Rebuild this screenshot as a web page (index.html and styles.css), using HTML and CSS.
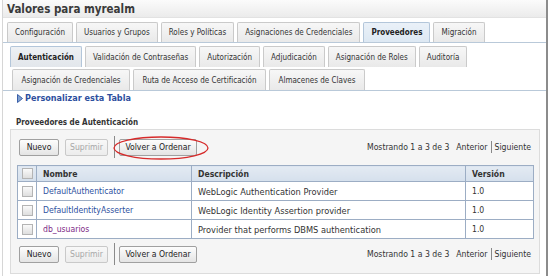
FILE: index.html
```html
<!DOCTYPE html>
<html lang="es">
<head>
<meta charset="utf-8">
<title>Valores para myrealm</title>
<link rel="stylesheet" href="styles.css">
</head>
<body>
<div class="panel">
  <div class="titlebar">Valores para myrealm</div>
  <div class="tabs top">
    <span class="tab">Configuración</span>
    <span class="tab">Usuarios y Grupos</span>
    <span class="tab">Roles y Políticas</span>
    <span class="tab">Asignaciones de Credenciales</span>
    <span class="tab active">Proveedores</span>
    <span class="tab">Migración</span>
  </div>
  <div class="tabs sub">
    <span class="tab active">Autenticación</span>
    <span class="tab">Validación de Contraseñas</span>
    <span class="tab">Autorización</span>
    <span class="tab">Adjudicación</span>
    <span class="tab">Asignación de Roles</span>
    <span class="tab">Auditoría</span>
    <span class="tab row3 first">Asignación de Credenciales</span>
    <span class="tab row3">Ruta de Acceso de Certificación</span>
    <span class="tab row3">Almacenes de Claves</span>
  </div>
  <div class="customize">
    <svg class="cust-icon" width="6" height="9" viewBox="0 0 6 9"><path d="M0.5 0.5 L5.5 4.5 L0.5 8.5 Z" fill="#7fa0d0" stroke="#3a5fa8" stroke-width="1"/></svg>
    <span class="link bold">Personalizar esta Tabla</span>
  </div>
  <div class="section">Proveedores de Autenticación</div>
  <div class="tablebox">
    <div class="toolbar">
      <div class="btns">
        <span class="btn b-new">Nuevo</span>
        <span class="btn b-del disabled">Suprimir</span>
        <span class="sep"></span>
        <span class="btn b-order">Volver a Ordenar<svg class="ring" width="96" height="24" viewBox="0 0 96 24"><ellipse cx="48" cy="12" rx="47" ry="11" fill="none" stroke="#d62a2a" stroke-width="1.3"/></svg></span>
      </div>
      <div class="pager">Mostrando 1 a 3 de 3<span class="gap"></span>Anterior<span class="bar"></span>Siguiente</div>
    </div>
    <table class="grid">
      <colgroup>
        <col class="w-chk"><col class="w-name"><col class="w-desc"><col class="w-ver">
      </colgroup>
      <tr class="head">
        <th class="chk"><span class="box"></span></th>
        <th>Nombre</th>
        <th>Descripción</th>
        <th>Versión</th>
      </tr>
      <tr>
        <td class="chk"><span class="box"></span></td>
        <td><span class="link">DefaultAuthenticator</span></td>
        <td class="desc">WebLogic Authentication Provider</td>
        <td>1.0</td>
      </tr>
      <tr>
        <td class="chk"><span class="box"></span></td>
        <td><span class="link">DefaultIdentityAsserter</span></td>
        <td class="desc">WebLogic Identity Assertion provider</td>
        <td>1.0</td>
      </tr>
      <tr>
        <td class="chk"><span class="box"></span></td>
        <td><span class="link visited">db_usuarios</span></td>
        <td class="desc">Provider that performs DBMS authentication</td>
        <td>1.0</td>
      </tr>
    </table>
    <div class="toolbar bottom">
      <div class="btns">
        <span class="btn b-new">Nuevo</span>
        <span class="btn b-del disabled">Suprimir</span>
        <span class="sep"></span>
        <span class="btn b-order">Volver a Ordenar</span>
      </div>
      <div class="pager">Mostrando 1 a 3 de 3<span class="gap"></span>Anterior<span class="bar"></span>Siguiente</div>
    </div>
  </div>
</div>
</body>
</html>
```
FILE: styles.css
```css
html, body {
  margin: 0;
  padding: 0;
  background: #ffffff;
}
body {
  font-family: "DejaVu Sans Condensed", "DejaVu Sans", sans-serif;
  font-stretch: condensed;
  font-size: 8px;
  color: #333333;
  width: 555px;
  height: 276px;
  overflow: hidden;
}
.panel {
  margin-left: 2px;
  width: 543px;
  height: 276px;
  border-left: 1px solid #d6d6d6;
  border-right: 2px solid #8c8c8c;
  background: #ffffff;
}
.titlebar {
  height: 17px;
  line-height: 18px;
  padding-left: 4px;
  font-weight: bold;
  font-size: 11.5px;
  color: #3a3a3a;
  background: linear-gradient(#fbfbfb, #ebebeb);
  border-bottom: 1px solid #e2e2e2;
}
.tabs {
  display: flex;
  flex-wrap: wrap;
  gap: 2px 3px;
  padding-left: 4px;
  border-bottom: 1px solid #b9c9d9;
}
.tabs.top {
  padding-top: 4px;
}
.tabs.sub {
  padding-top: 3px;
  padding-left: 7px;
}
.tab {
  display: flex;
  align-items: center;
  height: 19px;
  padding: 0 7px;
  border: 1px solid #cacaca;
  border-bottom: none;
  border-radius: 2px 2px 0 0;
  background: linear-gradient(#f7f7f7, #e9e9e9);
  color: #333333;
  white-space: nowrap;
}
.tabs.sub .tab {
  height: 20px;
}
.tabs.sub .tab.row3 {
  padding: 0 8.5px;
}
.tabs.sub .tab.first {
  margin-left: 2px;
}
.tab.active {
  font-weight: bold;
  color: #222222;
  background: linear-gradient(#eaf1f8, #dde8f3);
  border-color: #b3c6da;
}
.tabs.sub .tab.active {
  background: linear-gradient(#eef1f4, #e2e6eb);
}
.customize {
  display: flex;
  align-items: center;
  gap: 2px;
  height: 14px;
  margin-top: 0;
  padding-left: 14px;
  font-size: 9px;
}
.link {
  color: #2d4f9e;
}
.link.visited {
  color: #7d2a86;
}
.bold {
  font-weight: bold;
}
.section {
  margin-top: 12px;
  padding-left: 13px;
  height: 12px;
  line-height: 12px;
  font-weight: bold;
  color: #333333;
}
.tablebox {
  margin: 0 6px 0 7px;
  height: 143px;
  border: 1px solid #dcdcdc;
  background: #f5f5f5;
  padding: 0 6px 0 6px;
  font-size: 8.6px;
}
.toolbar {
  display: flex;
  justify-content: space-between;
  align-items: center;
  height: 24px;
  margin-top: 5px;
  padding-left: 2px;
}
.toolbar.bottom {
  margin-top: 3px;
}
.btns {
  display: flex;
  align-items: center;
  gap: 6px;
}
.btn {
  position: relative;
  display: inline-flex;
  align-items: center;
  justify-content: center;
  box-sizing: border-box;
  height: 17px;
  padding: 0;
  border: 1px solid #a0a0a0;
  border-radius: 2px;
  background: linear-gradient(#fdfdfd, #e4e4e4);
  color: #222222;
  white-space: nowrap;
}
.b-new { width: 40px; }
.b-del { width: 43px; }
.b-order { width: 78px; }
.btn.disabled {
  color: #a8a8a8;
  border-color: #c9c9c9;
  background: linear-gradient(#f8f8f8, #ececec);
}
.sep {
  width: 1px;
  height: 22px;
  background: #8a8a8a;
  margin: 0 -2px 0 0;
}
.ring {
  position: absolute;
  left: -7px;
  top: -4px;
}
.pager {
  display: flex;
  align-items: center;
  padding-right: 2px;
  color: #333333;
}
.gap {
  width: 7px;
}
.bar {
  width: 1px;
  height: 12px;
  background: #888888;
  margin: 0 3px;
}
.grid {
  width: 516px;
  table-layout: fixed;
  border-collapse: collapse;
  background: #ffffff;
  margin-top: 6px;
}
.w-chk { width: 19px; }
.w-name { width: 155px; }
.w-desc { width: 274px; }
.w-ver { width: 68px; }
.grid th, .grid td {
  border: 1px solid #9cadc4;
  height: 18px;
  padding: 0 0 0 6px;
  text-align: left;
  white-space: nowrap;
  overflow: hidden;
}
.grid td.desc {
  font-size: 9.2px;
}
.grid th {
  height: 15px;
  background: linear-gradient(#e3eaf3, #d5e0ec);
  font-weight: bold;
  color: #333333;
}
.grid .chk {
  padding: 0;
  text-align: center;
}
.box {
  display: inline-block;
  width: 9px;
  height: 9px;
  border: 1px solid #b4b4b4;
  background: linear-gradient(#fafafa, #dedede);
  vertical-align: middle;
}
```
